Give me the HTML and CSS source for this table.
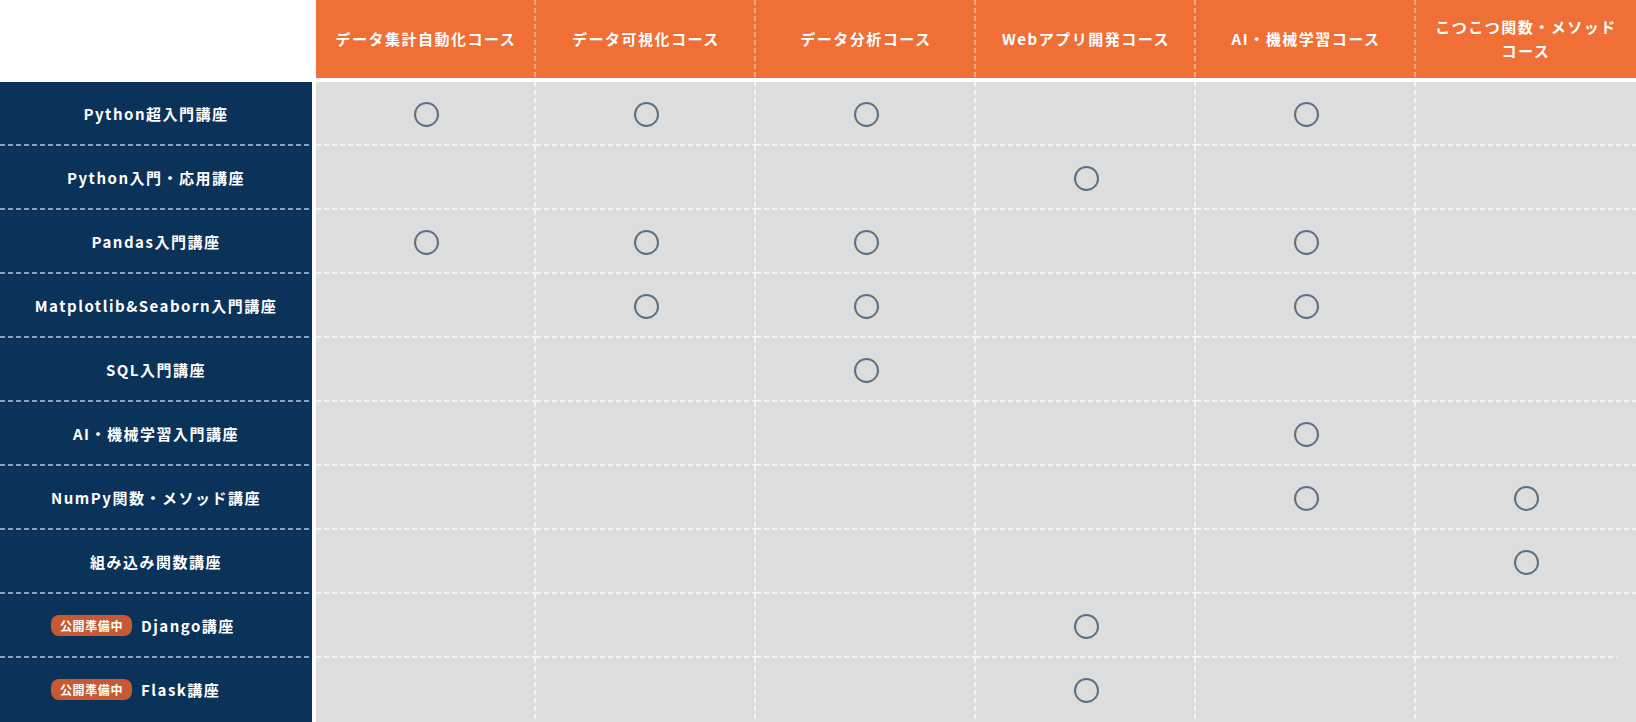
FILE: index.html
```html
<!DOCTYPE html>
<html lang="ja">
<head>
<meta charset="utf-8">
<title>講座とコースの対応表</title>
<link rel="stylesheet" href="styles.css">
</head>
<body>
<div class="matrix">
  <div class="head-row">
    <div class="corner"></div>
    <div class="heads">
      <div class="hcell">データ集計自動化コース</div>
      <div class="hcell">データ可視化コース</div>
      <div class="hcell">データ分析コース</div>
      <div class="hcell">Webアプリ開発コース</div>
      <div class="hcell">AI・機械学習コース</div>
      <div class="hcell">こつこつ関数・メソッド<br>コース</div>
    </div>
  </div>

  <div class="rows">
    <div class="row">
      <div class="label">Python超入門講座</div>
      <div class="cells">
        <div class="cell"><span class="mark"></span></div>
        <div class="cell"><span class="mark"></span></div>
        <div class="cell"><span class="mark"></span></div>
        <div class="cell"></div>
        <div class="cell"><span class="mark"></span></div>
        <div class="cell"></div>
      </div>
    </div>
    <div class="row">
      <div class="label">Python入門・応用講座</div>
      <div class="cells">
        <div class="cell"></div>
        <div class="cell"></div>
        <div class="cell"></div>
        <div class="cell"><span class="mark"></span></div>
        <div class="cell"></div>
        <div class="cell"></div>
      </div>
    </div>
    <div class="row">
      <div class="label">Pandas入門講座</div>
      <div class="cells">
        <div class="cell"><span class="mark"></span></div>
        <div class="cell"><span class="mark"></span></div>
        <div class="cell"><span class="mark"></span></div>
        <div class="cell"></div>
        <div class="cell"><span class="mark"></span></div>
        <div class="cell"></div>
      </div>
    </div>
    <div class="row">
      <div class="label">Matplotlib&amp;Seaborn入門講座</div>
      <div class="cells">
        <div class="cell"></div>
        <div class="cell"><span class="mark"></span></div>
        <div class="cell"><span class="mark"></span></div>
        <div class="cell"></div>
        <div class="cell"><span class="mark"></span></div>
        <div class="cell"></div>
      </div>
    </div>
    <div class="row">
      <div class="label">SQL入門講座</div>
      <div class="cells">
        <div class="cell"></div>
        <div class="cell"></div>
        <div class="cell"><span class="mark"></span></div>
        <div class="cell"></div>
        <div class="cell"></div>
        <div class="cell"></div>
      </div>
    </div>
    <div class="row">
      <div class="label">AI・機械学習入門講座</div>
      <div class="cells">
        <div class="cell"></div>
        <div class="cell"></div>
        <div class="cell"></div>
        <div class="cell"></div>
        <div class="cell"><span class="mark"></span></div>
        <div class="cell"></div>
      </div>
    </div>
    <div class="row">
      <div class="label">NumPy関数・メソッド講座</div>
      <div class="cells">
        <div class="cell"></div>
        <div class="cell"></div>
        <div class="cell"></div>
        <div class="cell"></div>
        <div class="cell"><span class="mark"></span></div>
        <div class="cell"><span class="mark"></span></div>
      </div>
    </div>
    <div class="row">
      <div class="label">組み込み関数講座</div>
      <div class="cells">
        <div class="cell"></div>
        <div class="cell"></div>
        <div class="cell"></div>
        <div class="cell"></div>
        <div class="cell"></div>
        <div class="cell"><span class="mark"></span></div>
      </div>
    </div>
    <div class="row">
      <div class="label pending"><span class="badge">公開準備中</span>Django講座</div>
      <div class="cells">
        <div class="cell"></div>
        <div class="cell"></div>
        <div class="cell"></div>
        <div class="cell"><span class="mark"></span></div>
        <div class="cell"></div>
        <div class="cell short"></div>
      </div>
    </div>
    <div class="row last">
      <div class="label pending"><span class="badge">公開準備中</span>Flask講座</div>
      <div class="cells">
        <div class="cell"></div>
        <div class="cell"></div>
        <div class="cell"></div>
        <div class="cell"><span class="mark"></span></div>
        <div class="cell"></div>
        <div class="cell"></div>
      </div>
    </div>
  </div>
</div>
</body>
</html>
```

FILE: styles.css
```css
html, body {
  margin: 0;
  padding: 0;
  background: #ffffff;
}

body {
  font-family: "Noto Sans CJK JP", "Noto Sans", sans-serif;
  font-weight: 700;
  color: #ffffff;
}

.matrix {
  width: 1636px;
  display: flex;
  flex-direction: column;
  row-gap: 4px;
}

.head-row {
  display: grid;
  grid-template-columns: 312px 1fr;
  column-gap: 4px;
  height: 78px;
}

.heads {
  display: grid;
  grid-template-columns: repeat(6, 1fr);
  background: #ef6f37;
}

.hcell {
  display: flex;
  align-items: center;
  justify-content: center;
  text-align: center;
  font-size: 15px;
  line-height: 24px;
  letter-spacing: 0.1em;
  padding-bottom: 1px;
  background-image: linear-gradient(to bottom, #f7a582 5px, transparent 5px);
  background-size: 2px 8px;
  background-position: right top;
  background-repeat: repeat-y;
}

.hcell:last-child {
  background-image: none;
}

.rows {
  display: flex;
  flex-direction: column;
}

.row {
  display: grid;
  grid-template-columns: 312px 1fr;
  column-gap: 4px;
  height: 64px;
}

.label {
  display: flex;
  align-items: center;
  justify-content: center;
  background-color: #0b3259;
  font-size: 15px;
  letter-spacing: 0.1em;
  padding-bottom: 1px;
  background-image: linear-gradient(to right, #8fa3b8 5px, transparent 5px);
  background-size: 8px 2px;
  background-position: left bottom;
  background-repeat: repeat-x;
}

.label.pending {
  justify-content: flex-start;
  padding-left: 51px;
}

.cells {
  display: grid;
  grid-template-columns: repeat(6, 1fr);
  background: #dddddd;
}

.cell {
  display: flex;
  align-items: center;
  justify-content: center;
  background-image:
    linear-gradient(to right, #f3f3f3 5px, transparent 5px),
    linear-gradient(to bottom, #f3f3f3 5px, transparent 5px);
  background-size: 8px 2px, 2px 8px;
  background-position: left bottom, right top;
  background-repeat: repeat-x, repeat-y;
}

.cell:last-child {
  background-image: linear-gradient(to right, #f3f3f3 5px, transparent 5px);
  background-size: 8px 2px;
  background-position: left bottom;
  background-repeat: repeat-x;
}

.cell.short {
  background-size: 8px 2px;
  background-position: left bottom;
  background-repeat: repeat-x;
  background-image: linear-gradient(to right, #f3f3f3 5px, transparent 5px);
  background-clip: content-box;
  padding-right: 19px;
}

.row.last .label,
.row.last .cell {
  background-image: none;
}

.row.last .cell:not(:last-child) {
  background-image: linear-gradient(to bottom, #f3f3f3 5px, transparent 5px);
  background-size: 2px 8px;
  background-position: right top;
  background-repeat: repeat-y;
}

.mark {
  display: block;
  width: 21px;
  height: 21px;
  border: 2px solid #5c7088;
  border-radius: 50%;
}

.badge {
  display: inline-block;
  background: #c65a31;
  color: #ffffff;
  font-size: 12px;
  line-height: 21px;
  height: 21px;
  padding: 0 9px;
  border-radius: 8px;
  letter-spacing: 0.05em;
  margin-right: 9px;
}
```
